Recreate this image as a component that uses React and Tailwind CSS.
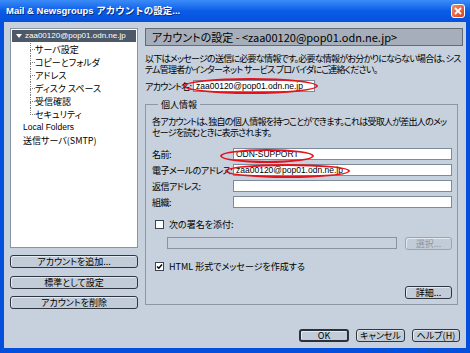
import React from "react";

const jp = "font-['Noto_Sans_CJK_JP',sans-serif] [font-feature-settings:'palt']";
const latin = "font-['Liberation_Sans','Noto_Sans_CJK_JP',sans-serif]";

function Btn({ children, className = "", disabled = false, isDefault = false }) {
  const border = isDefault ? "border-2 border-[#2a313b]" : disabled ? "border border-[#9aa5b2]" : "border border-[#2f3640]";
  const text = disabled ? "text-[#8e99a6]" : "text-black";
  return (
    <button
      className={`h-[13px] rounded-[3px] ${border} ${text} bg-[#c2ccd8] shadow-[inset_1px_1px_0_#e3e9f0] flex items-center justify-center text-[9px] leading-none whitespace-nowrap ${jp} ${className}`}
    >
      {children}
    </button>
  );
}

function CheckBox({ checked }) {
  return (
    <span className="w-[9px] h-[9px] bg-white border border-[#3a4552] flex items-center justify-center shrink-0">
      {checked && (
        <svg width="7" height="7" viewBox="0 0 7 7">
          <path d="M1 3.5 L2.8 5.3 L6 1.5" fill="none" stroke="#000" strokeWidth="1.4" />
        </svg>
      )}
    </span>
  );
}

function TextField({ value = "", className = "" }) {
  return (
    <div className={`h-[12px] bg-white border border-[#7c8b9b] flex items-center px-[2px] text-[8.5px] leading-none ${latin} ${className}`}>
      {value}
    </div>
  );
}

const treeChildren = ["サーバ設定", "コピーとフォルダ", "アドレス", "ディスク スペース", "受信確認", "セキュリティ"];

function Ellipse({ className }) {
  return <div className={`absolute rounded-[50%] border-2 border-[#e5121c] pointer-events-none ${className}`} />;
}

export default function App() {
  return (
    <div className="relative w-[470px] h-[353px] flex flex-col bg-[#0450dc] overflow-hidden">
      {/* title bar */}
      <div className="h-[22px] shrink-0 flex items-center bg-gradient-to-b from-[#3b8cf7] via-[#0a5ce8] to-[#0551db] pl-[6px] pr-[5px]">
        <span className={`flex-1 text-white font-bold text-[9.5px] leading-none [text-shadow:1px_1px_0_#0a2a7a] ${latin}`}>
          Mail &amp; Newsgroups アカウントの設定...
        </span>
        <div className="w-[14px] h-[14px] rounded-[3px] border border-white bg-gradient-to-br from-[#f08a6a] to-[#d6401c] flex items-center justify-center">
          <svg width="8" height="8" viewBox="0 0 8 8">
            <path d="M1 1 L7 7 M7 1 L1 7" stroke="#fff" strokeWidth="1.8" />
          </svg>
        </div>
      </div>

      {/* body */}
      <div className="flex-1 mx-[4px] mb-[5px] bg-[#c6d1dd] flex flex-col">
        <div className="flex pt-[6px]">
          {/* left column */}
          <div className="ml-[6px] w-[128px] flex flex-col">
            <div className="h-[220px] bg-white border border-[#8794a3] flex flex-col">
              <div className={`mt-[1px] mx-[1px] h-[12px] bg-[#4d5868] text-white flex items-center text-[8px] leading-none ${latin}`}>
                <svg className="ml-[4px] mr-[3px]" width="6" height="4" viewBox="0 0 6 4">
                  <path d="M0 0 H6 L3 4 Z" fill="#fff" />
                </svg>
                zaa00120@pop01.odn.ne.jp
              </div>
              <div className="mt-[1px] flex flex-col">
                {treeChildren.map((t, i) => (
                  <div key={t} className="h-[13px] flex items-stretch pl-[19px]">
                    <div className="w-[5px] flex flex-col shrink-0">
                      <div className="h-1/2 border-l border-b border-dotted border-[#7d7d7d]" />
                      <div className={`h-1/2 ${i < treeChildren.length - 1 ? "border-l border-dotted border-[#7d7d7d]" : ""}`} />
                    </div>
                    <span className={`self-center text-[9px] leading-none ${jp}`}>{t}</span>
                  </div>
                ))}
                <div className={`h-[13px] flex items-center pl-[12px] text-[8.5px] leading-none ${latin}`}>Local Folders</div>
                <div className={`h-[13px] flex items-center pl-[12px] text-[9px] leading-none ${jp}`}>送信サーバ(SMTP)</div>
              </div>
            </div>
            <Btn className="mt-[7px]">アカウントを追加...</Btn>
            <Btn className="mt-[8px]">標準として設定</Btn>
            <Btn className="mt-[7px]">アカウントを削除</Btn>
          </div>

          {/* right column */}
          <div className="ml-[7px] w-[318px] min-w-0 flex flex-col">
            <div className={`h-[18px] bg-[#a6aeb9] border border-[#626b76] flex items-center pl-[6px] text-[11px] leading-none text-black ${jp}`}>
              アカウントの設定 - &lt;zaa00120@pop01.odn.ne.jp&gt;
            </div>
            <div className={`mt-[7px] text-[9px] tracking-[-0.75px] leading-[11px] whitespace-nowrap ${jp}`}>
              <div>以下はメッセージの送信に必要な情報です。必要な情報がお分かりにならない場合は、シス</div>
              <div>テム管理者かインターネット サービス プロバイダにご連絡ください。</div>
            </div>
            <div className="mt-[5px] h-[12px] flex items-center">
              <span className={`w-[48px] shrink-0 text-[9px] tracking-[-0.7px] leading-none whitespace-nowrap ${jp}`}>アカウント名:</span>
              <TextField value="zaa00120@pop01.odn.ne.jp" className="w-[122px]" />
            </div>

            <fieldset className="mt-[7px] w-[313px] min-w-0 border border-[#8b97a5] pl-[6px] pr-[5px] pb-[5px]">
              <legend className={`ml-[6px] px-[3px] text-[9px] leading-[11px] ${jp}`}>個人情報</legend>
              <div className={`mt-[7px] text-[9px] tracking-[-0.75px] leading-[10.5px] whitespace-nowrap ${jp}`}>
                <div>各アカウントは、独自の個人情報を持つことができます。これは受取人が差出人のメッ</div>
                <div>セージを読むときに表示されます。</div>
              </div>
              <div className="mt-[10px] flex flex-col gap-[4px]">
                {[
                  ["名前:", "ODN-SUPPORT"],
                  ["電子メールのアドレス:", "zaa00120@pop01.odn.ne.jp"],
                  ["返信アドレス:", ""],
                  ["組織:", ""],
                ].map(([l, v]) => (
                  <div key={l} className="h-[12px] flex items-center">
                    <span className={`w-[81px] shrink-0 text-[9px] tracking-[-0.5px] leading-none whitespace-nowrap ${jp}`}>{l}</span>
                    <TextField value={v} className="flex-1 min-w-0" />
                  </div>
                ))}
              </div>
              <div className="mt-[12px] h-[9px] flex items-center pl-[3px] gap-[5px]">
                <CheckBox />
                <span className={`text-[9px] leading-none ${jp}`}>次の署名を添付:</span>
              </div>
              <div className="mt-[8px] h-[12px] flex items-center pl-[15px] gap-[8px]">
                <div className="w-[230px] h-[12px] border border-[#8593a2] bg-[#c6d1dd]" />
                <Btn disabled className="w-[47px]">選択...</Btn>
              </div>
              <div className="mt-[13px] h-[9px] flex items-center pl-[3px] gap-[5px]">
                <CheckBox checked />
                <span className={`text-[9px] leading-none ${jp}`}>HTML 形式でメッセージを作成する</span>
              </div>
              <div className="mt-[15px] flex justify-end">
                <Btn className="w-[47px]">詳細...</Btn>
              </div>
            </fieldset>
          </div>
        </div>

        <div className="flex-1" />
        <div className="flex justify-end gap-[7px] pr-[6px] mb-[6px]">
          <Btn isDefault className="w-[50px] h-[12px]">OK</Btn>
          <Btn className="w-[49px] h-[12px]">キャンセル</Btn>
          <Btn className="w-[48px] h-[12px]">ヘルプ(H)</Btn>
        </div>
      </div>

      {/* annotation ellipses */}
      <Ellipse className="left-[183px] top-[78px] w-[135px] h-[16px]" />
      <Ellipse className="left-[220px] top-[149px] w-[94px] h-[14px]" />
      <Ellipse className="left-[225px] top-[164px] w-[125px] h-[14px]" />
    </div>
  );
}
